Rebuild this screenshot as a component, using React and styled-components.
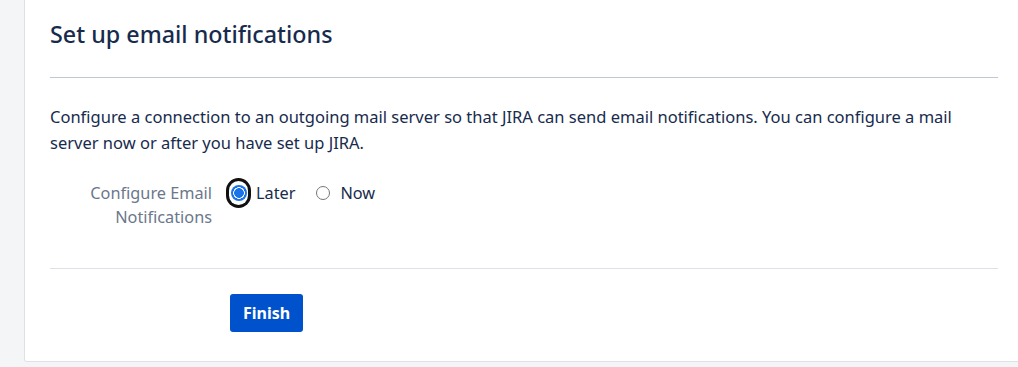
import React from "react";
import styled, { createGlobalStyle } from "styled-components";

const GlobalStyle = createGlobalStyle`
  html, body {
    margin: 0;
    padding: 0;
    background: #f4f5f7;
    overflow: hidden;
  }
  body {
    font-family: "Noto Sans", "Open Sans", sans-serif;
    color: #172b4d;
  }
`;

const App = () => {
  return (
    <>
      <GlobalStyle />
      <Page>
        <Card>
          <Header>
            <Title>Set up email notifications</Title>
          </Header>
          <Intro>
            Configure a connection to an outgoing mail server so that JIRA can
            send email notifications. You can configure a mail server now or
            after you have set up JIRA.
          </Intro>
          <FieldRow>
            <FieldLabel>Configure Email Notifications</FieldLabel>
            <RadioGroup>
              <RadioOption>
                <RadioBox $focused>
                  <RadioMark $checked />
                </RadioBox>
                <OptionText>Later</OptionText>
              </RadioOption>
              <RadioOption>
                <RadioBox>
                  <RadioMark />
                </RadioBox>
                <OptionText>Now</OptionText>
              </RadioOption>
            </RadioGroup>
          </FieldRow>
          <Footer>
            <PrimaryButton type="button">Finish</PrimaryButton>
          </Footer>
        </Card>
      </Page>
    </>
  );
};

const Page = styled.div`
  width: 1018px;
  height: 367px;
  overflow: hidden;
`;
const Card = styled.div`
  box-sizing: border-box;
  width: 1000px;
  margin-left: 24px;
  background: #ffffff;
  border: 1px solid #dfe1e6;
  border-top: none;
  border-radius: 0 0 3px 3px;
  padding: 0 25px 29px 25px;
`;
const Header = styled.div`
  padding: 20px 0 29px;
  border-bottom: 1px solid #c1c7d0;
`;
const Title = styled.h2`
  margin: 0;
  font-size: 23.3px;
  line-height: 28px;
  font-weight: 500;
  color: #172b4d;
`;
const Intro = styled.p`
  margin: 26px 0 0;
  font-size: 16.5px;
  line-height: 26px;
  color: #172b4d;
`;
const FieldRow = styled.div`
  display: grid;
  grid-template-columns: 162px 1fr;
  column-gap: 17px;
  margin-top: 25px;
`;
const FieldLabel = styled.div`
  text-align: right;
  font-size: 16.3px;
  line-height: 24px;
  color: #6b778c;
  padding-left: 30px;
`;
const RadioGroup = styled.div`
  display: flex;
  align-items: flex-start;
  gap: 18px;
`;
const RadioOption = styled.label`
  display: flex;
  align-items: center;
  gap: 8px;
  height: 24px;
  cursor: pointer;
`;
const RadioBox = styled.span`
  width: 19px;
  height: 24px;
  display: flex;
  align-items: center;
  justify-content: center;
  border-radius: 10px;
  box-shadow: ${(p) => (p.$focused ? "0 0 0 3px #101010" : "none")};
`;
const RadioMark = styled.span`
  box-sizing: border-box;
  width: ${(p) => (p.$checked ? "16px" : "14px")};
  height: ${(p) => (p.$checked ? "16px" : "14px")};
  border-radius: 50%;
  background: ${(p) =>
    p.$checked
      ? "radial-gradient(circle, #1a73e8 0 4.6px, #ffffff 5px 5.6px, #1a73e8 6px)"
      : "#ffffff"};
  border: ${(p) => (p.$checked ? "none" : "1px solid #767676")};
`;
const OptionText = styled.span`
  font-size: 16.3px;
  line-height: 24px;
  color: #172b4d;
`;
const Footer = styled.div`
  margin-top: 39px;
  border-top: 1px solid #dfe1e6;
  padding-top: 25px;
`;
const PrimaryButton = styled.button`
  margin-left: 180px;
  height: 38px;
  padding: 0 13px;
  border: none;
  border-radius: 3px;
  background: #0052cc;
  color: #ffffff;
  font-family: "Noto Sans", "Open Sans", sans-serif;
  font-size: 16px;
  font-weight: 700;
  cursor: pointer;
`;

export default App;
